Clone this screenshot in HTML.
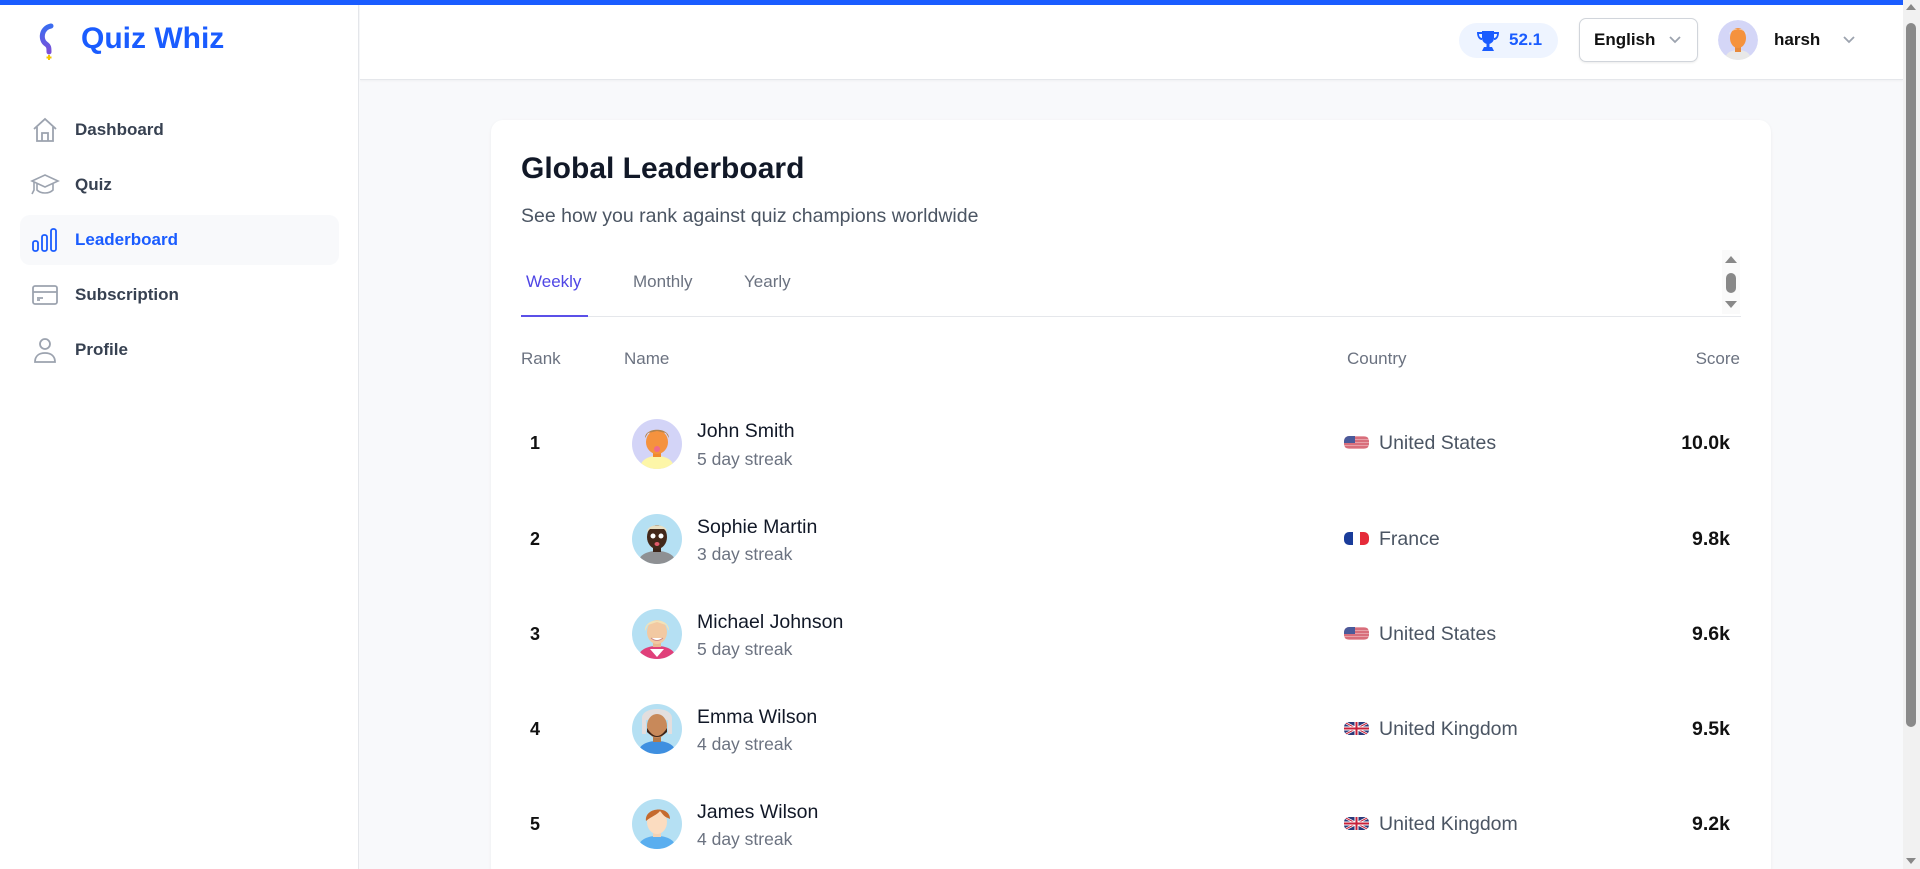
<!DOCTYPE html>
<html style="overflow:hidden"><head><meta charset="utf-8"><style>
*{margin:0;padding:0;box-sizing:border-box}
html,body{overflow:hidden}
body{width:1920px;height:869px;background:#f8f9fb;font-family:"Liberation Sans",Arial,sans-serif;position:relative}
.a{position:absolute;white-space:nowrap}
.topbar{left:0;top:0;width:1903px;height:5px;background:#1a5cff}
.side{left:0;top:5px;width:359px;height:864px;background:#fff;border-right:1px solid #e5e7eb}
.hdr{left:360px;top:5px;width:1543px;height:75px;background:#fff;border-bottom:1px solid #e5e7eb;box-shadow:0 1px 2px rgba(0,0,0,.04)}
.nav{font-size:17px;font-weight:bold;color:#374151}
.card{left:491px;top:120px;width:1280px;height:760px;background:#fff;border-radius:12px;box-shadow:0 1px 3px rgba(0,0,0,.06)}
.th{font-size:17px;color:#6b7280;top:349px}
.rk{font-size:18px;font-weight:bold;color:#111;left:530px}
.nm{font-size:19.5px;color:#111827;left:697px}
.st{font-size:17.5px;color:#6b7280;left:697px}
.ct{font-size:19.5px;color:#4b5563;left:1379px}
.sc{font-size:19.5px;font-weight:bold;color:#111;right:190px}
.av{left:632px;width:50px;height:50px}
.fl{left:1344px;width:25px;height:13px;border-radius:5px;overflow:hidden}
</style></head><body>
<div class="a topbar"></div>
<div class="a side"></div>
<div class="a hdr"></div>

<svg class="a" style="left:36px;top:22px" width="24" height="40" viewBox="0 0 24 40"><defs><linearGradient id="g" x1="0" y1="0" x2="0" y2="1"><stop offset="0" stop-color="#3b6cf0"/><stop offset="1" stop-color="#7b4fd8"/></linearGradient></defs><path d="M15 4 C5 6 4 18 10 22 C13 24 13 26 13 30" fill="none" stroke="url(#g)" stroke-width="5" stroke-linecap="round"/><path d="M13 33v5M10.5 35.5h5" stroke="#f5c400" stroke-width="2"/></svg>
<div class="a" style="left:81px;top:22px;font-size:30px;font-weight:bold;color:#1a5cff">Quiz Whiz</div>

<div class="a" style="left:20px;top:215px;width:319px;height:50px;background:#f8f9fb;border-radius:10px"></div>
<svg class="a" style="left:31px;top:116px" width="28" height="28" viewBox="0 0 28 28" fill="none" stroke="#9ca3af" stroke-width="1.8"><path d="M3 13L14 3l11 10M6 11v14h16V11M11 25v-8h6v8"/></svg>
<div class="a nav" style="left:75px;top:120px">Dashboard</div>
<svg class="a" style="left:30px;top:172px" width="30" height="26" viewBox="0 0 30 26" fill="none" stroke="#9ca3af" stroke-width="1.6"><path d="M2 9l13-6 13 6-13 6zM7 11v7c4 4 12 4 16 0v-7M4 10v8l-2 4"/></svg>
<div class="a nav" style="left:75px;top:175px">Quiz</div>
<svg class="a" style="left:32px;top:227px" width="26" height="26" viewBox="0 0 26 26" fill="none" stroke="#1a5cff" stroke-width="1.8"><rect x="1" y="14" width="5" height="10" rx="2"/><rect x="10" y="8" width="5" height="16" rx="2"/><rect x="19" y="2" width="5" height="22" rx="2"/></svg>
<div class="a nav" style="left:75px;top:230px;color:#1a5cff">Leaderboard</div>
<svg class="a" style="left:31px;top:283px" width="28" height="24" viewBox="0 0 28 24" fill="none" stroke="#9ca3af" stroke-width="1.8"><rect x="2" y="3" width="24" height="18" rx="2"/><path d="M2 9h24M6 15h6M6 17h3"/></svg>
<div class="a nav" style="left:75px;top:285px">Subscription</div>
<svg class="a" style="left:33px;top:336px" width="24" height="28" viewBox="0 0 24 28" fill="none" stroke="#9ca3af" stroke-width="1.8"><circle cx="12" cy="8" r="5"/><path d="M2 26c0-6 4-9 10-9s10 3 10 9z"/></svg>
<div class="a nav" style="left:75px;top:340px">Profile</div>

<div class="a" style="left:1459px;top:23px;width:99px;height:35px;border-radius:18px;background:#eef4ff"></div>
<svg class="a" style="left:1476px;top:29px" width="24" height="24" viewBox="0 0 24 24" fill="#1a5cff"><path d="M6 2h12v7a6 6 0 0 1-12 0z"/><path d="M1 3h5v2H3c0 3 2 4 3 4v2C3 11 1 8 1 3zM23 3h-5v2h3c0 3-2 4-3 4v2c3 0 5-3 5-8z"/><rect x="10.5" y="14" width="3" height="4"/><path d="M6 22l2-4h8l2 4z"/></svg>
<div class="a" style="left:1509px;top:30px;font-size:17px;font-weight:bold;color:#1a5cff">52.1</div>
<div class="a" style="left:1579px;top:18px;width:119px;height:44px;border:1px solid #d1d5db;border-radius:7px;background:#fff;box-shadow:0 1px 2px rgba(0,0,0,.08)"></div>
<div class="a" style="left:1594px;top:30px;font-size:17px;font-weight:bold;color:#111">English</div>
<svg class="a" style="left:1668px;top:35px" width="14" height="10" viewBox="0 0 14 10" fill="none" stroke="#9ca3af" stroke-width="1.8"><path d="M2 2l5 5 5-5"/></svg>
<svg class="a" style="left:1718px;top:20px" width="40" height="40" viewBox="0 0 40 40"><defs><clipPath id="ch"><circle cx="20" cy="20" r="20"/></clipPath></defs><g clip-path="url(#ch)"><circle cx="20" cy="20" r="20" fill="#d4d6f7"/><path d="M7 40c0-7 6-10 13-10s13 3 13 10z" fill="#e8e8e8"/><rect x="17" y="25" width="6" height="7" fill="#e8893a"/><ellipse cx="20" cy="18" rx="8" ry="10" fill="#f5923e"/><path d="M11 15c0-8 18-8 18 0l-2-4-7-2-7 2z" fill="#eee"/></g></svg>
<div class="a" style="left:1774px;top:30px;font-size:17px;font-weight:bold;color:#111">harsh</div>
<svg class="a" style="left:1842px;top:35px" width="14" height="10" viewBox="0 0 14 10" fill="none" stroke="#9ca3af" stroke-width="1.8"><path d="M2 2l5 5 5-5"/></svg>

<div class="a" style="left:1903px;top:0;width:17px;height:869px;background:#f1f1f1"></div>
<div class="a" style="left:1906px;top:4px;width:0;height:0;border-left:5px solid transparent;border-right:5px solid transparent;border-bottom:6px solid #888"></div>
<div class="a" style="left:1906px;top:23px;width:10px;height:704px;background:#8a8a8a;border-radius:5px"></div>
<div class="a" style="left:1906px;top:858px;width:0;height:0;border-left:5px solid transparent;border-right:5px solid transparent;border-top:6px solid #888"></div>

<div class="a card"></div>
<div class="a" style="left:521px;top:152px;font-size:30px;font-weight:bold;color:#111827">Global Leaderboard</div>
<div class="a" style="left:521px;top:205px;font-size:19.5px;color:#4b5563">See how you rank against quiz champions worldwide</div>
<div class="a" style="left:526px;top:272px;font-size:17px;color:#4f46e5">Weekly</div>
<div class="a" style="left:633px;top:272px;font-size:17px;color:#6b7280">Monthly</div>
<div class="a" style="left:744px;top:272px;font-size:17px;color:#6b7280">Yearly</div>
<div class="a" style="left:521px;top:316px;width:1220px;height:1px;background:#e5e7eb"></div>
<div class="a" style="left:521px;top:315px;width:67px;height:2px;background:#5b50e8"></div>
<div class="a" style="left:1722px;top:250px;width:18px;height:64px;background:#fafafa"></div>
<div class="a" style="left:1725px;top:256px;width:0;height:0;border-left:6px solid transparent;border-right:6px solid transparent;border-bottom:7px solid #888"></div>
<div class="a" style="left:1726px;top:273px;width:10px;height:20px;background:#888;border-radius:5px"></div>
<div class="a" style="left:1725px;top:301px;width:0;height:0;border-left:6px solid transparent;border-right:6px solid transparent;border-top:7px solid #888"></div>

<div class="a th" style="left:521px">Rank</div>
<div class="a th" style="left:624px">Name</div>
<div class="a th" style="left:1347px">Country</div>
<div class="a th" style="right:180px">Score</div>

<div class="a rk" style="top:433px">1</div>
<svg class="a av" style="top:419px" viewBox="0 0 50 50"><defs><clipPath id="c1"><circle cx="25" cy="25" r="25"/></clipPath></defs><g clip-path="url(#c1)"><rect width="50" height="50" fill="#d3d4f7"/><path d="M8 50c0-9 8-13 17-13s17 4 17 13z" fill="#fdf6a8"/><rect x="21" y="30" width="8" height="8" fill="#f08a2c"/><ellipse cx="25" cy="23" rx="11" ry="12" fill="#f5923e"/><path d="M13 19c0-11 24-11 24 0l-3-5-9-2-9 2z" fill="#b5834a"/><ellipse cx="25" cy="30" rx="3" ry="3" fill="#f06a8a"/></g></svg>
<div class="a nm" style="top:420px">John Smith</div>
<div class="a st" style="top:449px">5 day streak</div>
<svg class="a fl" style="top:436px" viewBox="0 0 25 13"><rect width="25" height="13" fill="#e7a0a8"/><path d="M0 2h25M0 5h25M0 8h25M0 11h25" stroke="#d05060" stroke-width="1.2"/><rect width="11" height="7" fill="#4a5a9a"/></svg>
<div class="a ct" style="top:432px">United States</div>
<div class="a sc" style="top:432px">10.0k</div>

<div class="a rk" style="top:529px">2</div>
<svg class="a av" style="top:514px" viewBox="0 0 50 50"><defs><clipPath id="c2"><circle cx="25" cy="25" r="25"/></clipPath></defs><g clip-path="url(#c2)"><rect width="50" height="50" fill="#b5e0f3"/><path d="M6 50c0-9 9-13 19-13s19 4 19 13z" fill="#8e9093"/><rect x="21" y="30" width="8" height="8" fill="#3b2418"/><ellipse cx="25" cy="23" rx="10" ry="12" fill="#43281a"/><path d="M15 18c0-9 20-9 20 0l-3-3h-14z" fill="#e8dfc4"/><circle cx="21" cy="22" r="2.5" fill="#fff"/><circle cx="29" cy="22" r="2.5" fill="#fff"/><ellipse cx="25" cy="30" rx="2.5" ry="2" fill="#e05a6a"/></g></svg>
<div class="a nm" style="top:516px">Sophie Martin</div>
<div class="a st" style="top:544px">3 day streak</div>
<svg class="a fl" style="top:532px" viewBox="0 0 25 13"><rect width="9" height="13" fill="#1a3c9a"/><rect x="9" width="7" height="13" fill="#fff"/><rect x="16" width="9" height="13" fill="#e52b3a"/></svg>
<div class="a ct" style="top:528px">France</div>
<div class="a sc" style="top:528px">9.8k</div>

<div class="a rk" style="top:624px">3</div>
<svg class="a av" style="top:609px" viewBox="0 0 50 50"><defs><clipPath id="c3"><circle cx="25" cy="25" r="25"/></clipPath></defs><g clip-path="url(#c3)"><rect width="50" height="50" fill="#b5e0f3"/><path d="M6 50c0-9 9-13 19-13s19 4 19 13z" fill="#e0407a"/><path d="M18 40l7 8 7-8z" fill="#fff"/><rect x="21" y="30" width="8" height="8" fill="#e9b890"/><ellipse cx="25" cy="23" rx="10" ry="12" fill="#f2c9a2"/><path d="M13 22c-1-14 25-14 24 0l-3-6-9-3-9 3z" fill="#f1e2b8"/><path d="M19 29q6 5 12 0" fill="#fff" stroke="#c88" stroke-width="1"/></g></svg>
<div class="a nm" style="top:611px">Michael Johnson</div>
<div class="a st" style="top:639px">5 day streak</div>
<svg class="a fl" style="top:627px" viewBox="0 0 25 13"><rect width="25" height="13" fill="#e7a0a8"/><path d="M0 2h25M0 5h25M0 8h25M0 11h25" stroke="#d05060" stroke-width="1.2"/><rect width="11" height="7" fill="#4a5a9a"/></svg>
<div class="a ct" style="top:623px">United States</div>
<div class="a sc" style="top:623px">9.6k</div>

<div class="a rk" style="top:719px">4</div>
<svg class="a av" style="top:704px" viewBox="0 0 50 50"><defs><clipPath id="c4"><circle cx="25" cy="25" r="25"/></clipPath></defs><g clip-path="url(#c4)"><rect width="50" height="50" fill="#b5e0f3"/><path d="M6 50c0-9 9-13 19-13s19 4 19 13z" fill="#3f8fe0"/><path d="M10 14c0-12 30-12 30 0v16h-4V16H14v14h-4z" fill="#e3dede"/><rect x="21" y="30" width="8" height="8" fill="#b57a4a"/><ellipse cx="25" cy="22" rx="10" ry="12" fill="#c8895a"/><path d="M15 24q10 16 20 0v4q-10 10-20 0z" fill="#3a241a"/></g></svg>
<div class="a nm" style="top:706px">Emma Wilson</div>
<div class="a st" style="top:734px">4 day streak</div>
<svg class="a fl" style="top:722px" viewBox="0 0 25 13"><rect width="25" height="13" fill="#2a3a7a"/><path d="M0 0l25 13M25 0L0 13" stroke="#fff" stroke-width="2.5"/><path d="M0 0l25 13M25 0L0 13" stroke="#c8203a" stroke-width="1"/><path d="M12.5 0v13M0 6.5h25" stroke="#fff" stroke-width="4"/><path d="M12.5 0v13M0 6.5h25" stroke="#c8203a" stroke-width="2"/></svg>
<div class="a ct" style="top:718px">United Kingdom</div>
<div class="a sc" style="top:718px">9.5k</div>

<div class="a rk" style="top:814px">5</div>
<svg class="a av" style="top:799px" viewBox="0 0 50 50"><defs><clipPath id="c5"><circle cx="25" cy="25" r="25"/></clipPath></defs><g clip-path="url(#c5)"><rect width="50" height="50" fill="#b5e0f3"/><path d="M6 50c0-9 9-13 19-13s19 4 19 13z" fill="#5aaeef"/><rect x="21" y="30" width="8" height="8" fill="#f3d2b5"/><ellipse cx="25" cy="23" rx="10" ry="12" fill="#fbdcc0"/><path d="M14 22c-2-14 24-16 24-2l-2-1c-4-1-6-5-8-7-3 4-8 5-14 10z" fill="#c56a2e"/></g></svg>
<div class="a nm" style="top:801px">James Wilson</div>
<div class="a st" style="top:829px">4 day streak</div>
<svg class="a fl" style="top:817px" viewBox="0 0 25 13"><rect width="25" height="13" fill="#2a3a7a"/><path d="M0 0l25 13M25 0L0 13" stroke="#fff" stroke-width="2.5"/><path d="M0 0l25 13M25 0L0 13" stroke="#c8203a" stroke-width="1"/><path d="M12.5 0v13M0 6.5h25" stroke="#fff" stroke-width="4"/><path d="M12.5 0v13M0 6.5h25" stroke="#c8203a" stroke-width="2"/></svg>
<div class="a ct" style="top:813px">United Kingdom</div>
<div class="a sc" style="top:813px">9.2k</div>
</body></html>
